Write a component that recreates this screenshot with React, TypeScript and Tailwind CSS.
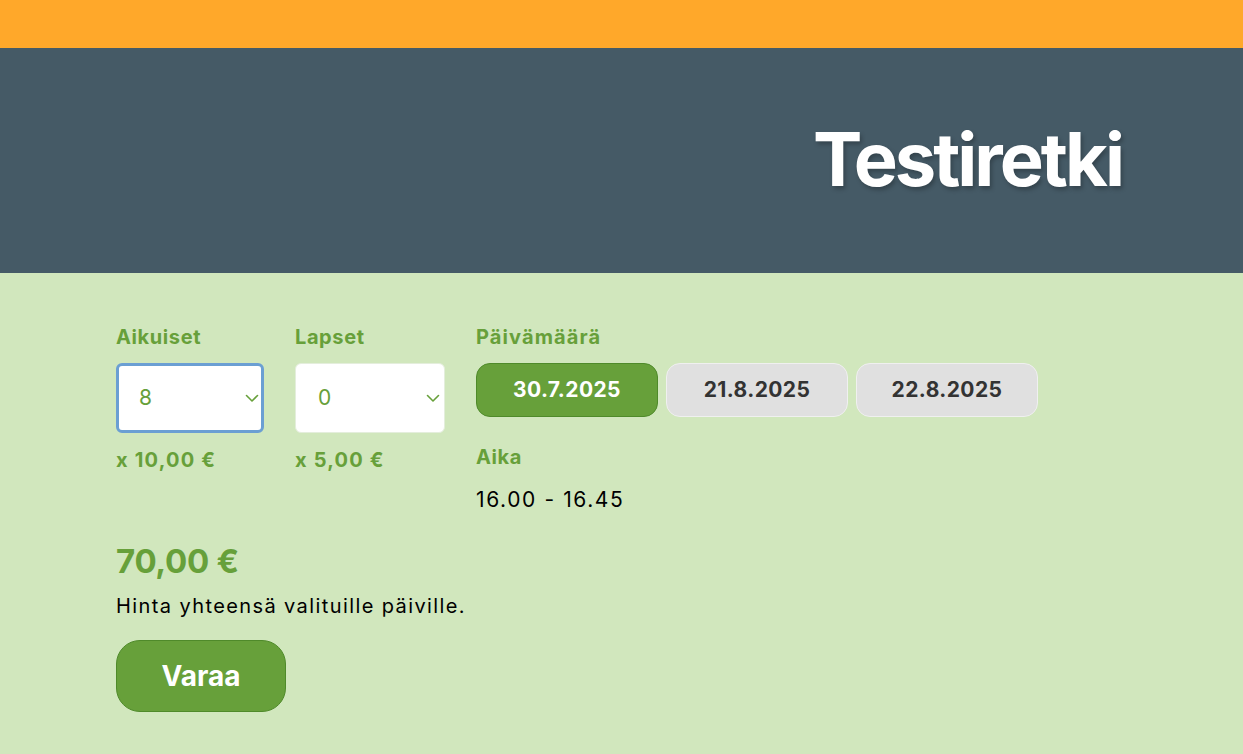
import React, { useState } from 'react';

const dates = ['30.7.2025', '21.8.2025', '22.8.2025'];

const Chevron: React.FC = () => (
  <svg
    className="pointer-events-none absolute right-[5px] top-1/2 -translate-y-1/2"
    width="14"
    height="14"
    viewBox="0 0 14 14"
    fill="none"
    stroke="#67a03a"
    strokeWidth="1.6"
    strokeLinecap="round"
    strokeLinejoin="round"
  >
    <path d="M1.5 4.5L7 10l5.5-5.5" />
  </svg>
);

const CountSelect: React.FC<{ value: number; focused?: boolean; onChange: (v: number) => void }> = ({
  value,
  focused,
  onChange,
}) => (
  <div className={`relative ${focused ? 'w-[148px]' : 'w-[150px]'}`}>
    <select
      value={value}
      onChange={(e) => onChange(Number(e.target.value))}
      className={`h-[70px] w-full appearance-none rounded-[6px] bg-white text-[21px] tracking-[1px] text-[#67a03a] outline-none ${
        focused ? 'border-[3px] border-[#6b9fd3] pl-[20px]' : 'border border-[#e4eedc] pl-[22px]'
      }`}
    >
      {Array.from({ length: 11 }, (_, i) => (
        <option key={i} value={i}>
          {i}
        </option>
      ))}
    </select>
    <Chevron />
  </div>
);

const App: React.FC = () => {
  const [adults, setAdults] = useState(8);
  const [kids, setKids] = useState(0);
  const [date, setDate] = useState(0);

  return (
    <div className="min-h-[754px] bg-[#d1e7bd] font-['Inter',sans-serif]">
      <div className="h-[48px] bg-[#ffa82a]" />
      <header className="flex h-[225px] items-center justify-end bg-[#455a66] pr-[121px]">
        <h1 className="pb-[2px] text-[74px] font-bold tracking-[-3px] text-white [text-shadow:2px_3px_4px_rgba(0,0,0,0.25)]">
          Testiretki
        </h1>
      </header>

      <main className="px-[116px] pt-[49px]">
        <div className="flex">
          <div className="w-[179px]">
            <label className="block text-[20px] font-bold tracking-[0.6px] text-[#67a03a]">Aikuiset</label>
            <div className="mt-[11px]">
              <CountSelect value={adults} focused onChange={setAdults} />
            </div>
            <p className="mt-[12px] text-[20px] font-bold tracking-[1.2px] text-[#67a03a]">x 10,00 €</p>
          </div>
          <div className="w-[181px]">
            <label className="block text-[20px] font-bold tracking-[0.6px] text-[#67a03a]">Lapset</label>
            <div className="mt-[11px]">
              <CountSelect value={kids} onChange={setKids} />
            </div>
            <p className="mt-[12px] text-[20px] font-bold tracking-[1.2px] text-[#67a03a]">x 5,00 €</p>
          </div>
          <div>
            <label className="block text-[20px] font-bold tracking-[1.1px] text-[#67a03a]">Päivämäärä</label>
            <div className="mt-[11px] flex gap-[8px]">
              {dates.map((d, i) => (
                <button
                  key={d}
                  onClick={() => setDate(i)}
                  className={`h-[54px] w-[182px] rounded-[14px] border text-[21px] font-bold tracking-[0.4px] ${
                    i === date
                      ? 'border-[#4f8a2a] bg-[#67a03a] text-white'
                      : 'border-[#f0f0f0] bg-[#e0e0e0] text-[#333333]'
                  }`}
                >
                  {d}
                </button>
              ))}
            </div>
            <p className="mt-[25px] text-[20px] font-bold tracking-[0.6px] text-[#67a03a]">Aika</p>
            <p className="mt-[12px] text-[21px] tracking-[1.6px] text-black">16.00 - 16.45</p>
          </div>
        </div>

        <p className="mt-[21px] text-[33px] font-bold tracking-[-0.3px] text-[#67a03a]">70,00 €</p>
        <p className="mt-[5px] text-[20px] tracking-[1.4px] text-black">Hinta yhteensä valituille päiville.</p>
        <button className="mt-[19px] h-[72px] w-[170px] rounded-[24px] border border-[#4f8a2a] bg-[#67a03a] text-[28px] font-bold text-white">
          Varaa
        </button>
      </main>
    </div>
  );
};

export default App;
